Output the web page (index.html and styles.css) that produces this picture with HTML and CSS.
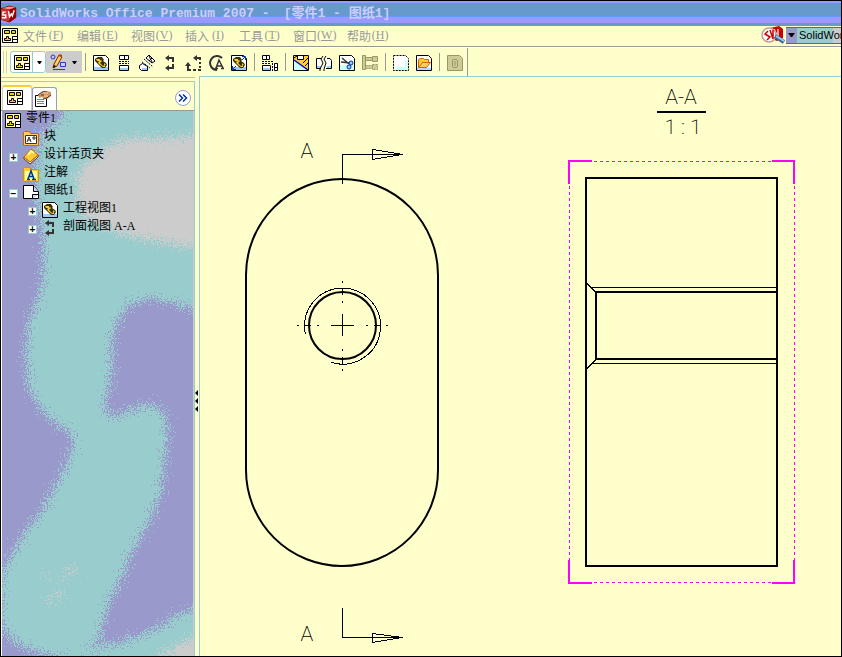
FILE: index.html
```html
<!DOCTYPE html>
<html lang="zh-CN">
<head>
  <meta charset="utf-8">
  <title>SolidWorks Office Premium 2007</title>
  <meta name="viewport" content="width=device-width, initial-scale=1.0">
  <link rel="stylesheet" href="styles.css">
</head>
<body>
  <!-- Shared icons -->
  <svg class="sprite" aria-hidden="true">
    <symbol id="i-sheet" viewBox="0 0 16 16">
      <path d="M.5 1.500h15v14H.500z" fill="#ffffcc" stroke="#000"/>
      <path d="M2.500 3.500h5v3h-5zM9.500 3.500h4v3h-4z" fill="#ffcc00" stroke="#000"/>
      <path d="M4.500 9.500h2v2h2v2h-6v-2h2z" fill="#ffcc00" stroke="#000"/>
      <path d="M10.500 9.500h5v6h-5zM10.500 12.500h5" fill="#fff" stroke="#000"/>
    </symbol>
    <symbol id="i-model" viewBox="0 0 16 16">
      <path d="M.5.500h12l3 3v12H.500z" fill="#fff" stroke="#000"/>
      <path d="M1 12h14v3H1z" fill="#99ccff"/>
      <path d="M2 4l3-2h4l2 3-1 1 3 2 1 2-2 3H9l-4-4-3-3z" fill="#333300"/>
      <path d="M3 4h4v2H4zM5 7l3-2 1 1-2 2 3 3 2-1v2h-2L6 9zM11 8l2 2h-2z" fill="#ffcc33"/>
    </symbol>
    <symbol id="i-section" viewBox="0 0 16 16">
      <path d="M7 3h4v4M11 9v4H7" fill="none" stroke="#333" stroke-width="2"/>
      <path d="M7 0v6L3 3zM7 10v6l-4-3z" fill="#333"/>
    </symbol>
    <symbol id="i-caret" viewBox="0 0 5 3">
      <path d="M0 0h5L3 3H2z" fill="#000"/>
    </symbol>
  </svg>

  <!-- Title -->
  <header class="titlebar">
    <svg class="app-logo" viewBox="0 0 18 18" aria-hidden="true">
      <path d="M0 3l9-3 7 2v11l-7 5-9-3z" fill="#990000"/>
      <path d="M0 4h9v13l-9-2z" fill="#cc3333"/>
      <path d="M9 4l7-2v11l-7 4z" fill="#990000"/>
      <path d="M1 3l8-2 6 1-6 2z" fill="#ff9999"/>
      <path d="M5 7H2v3h3v3H1M8 6l1 6 2-3 1 2 2-6" fill="none" stroke="#fff" stroke-width="1.500"/>
    </svg>
    <h1 class="title"><span>SolidWorks Office Premium 2007 -</span> <span>[零件1 - 图纸1]</span></h1>
  </header>

  <!-- Menu -->
  <div class="menubar">
    <svg class="icon"><use href="#i-sheet"/></svg>
    <nav class="menus">
      <button class="menu">文件<span>(<u>F</u>)</span></button>
      <button class="menu">编辑<span>(<u>E</u>)</span></button>
      <button class="menu">视图<span>(<u>V</u>)</span></button>
      <button class="menu">插入<span>(<u>I</u>)</span></button>
      <button class="menu">工具<span>(<u>T</u>)</span></button>
      <button class="menu">窗口<span>(<u>W</u>)</span></button>
      <button class="menu">帮助<span>(<u>H</u>)</span></button>
    </nav>
    <div class="search">
      <svg class="search-logo" viewBox="0 0 25 18" aria-hidden="true">
        <path d="M9 2l9-2 4 3v9l-6 3-7-3z" fill="#cc0000"/>
        <path d="M13 3v8M13 3l4 8V3" fill="none" stroke="#ffcccc" stroke-width="1.500"/>
        <circle cx="8" cy="9" r="7" fill="#fff" stroke="#cc9999" stroke-width="1.500"/>
        <path d="M7 5L4 8l5 3-3 3M9 4l3 9M12 4v9" fill="none" stroke="#cc0000" stroke-width="1.500"/>
        <path d="M14 10l9 6" stroke="#336699" stroke-width="4"/>
        <path d="M15 10l8 5" stroke="#99ccff" stroke-width="2"/>
      </svg>
      <button class="search-drop" aria-label="搜索范围"><svg class="search-caret"><use href="#i-caret"/></svg></button>
      <input class="search-box" type="text" value="SolidWorks" aria-label="搜索">
    </div>
  </div>

  <!-- Toolbar -->
  <div class="toolbar">
    <div class="grip"></div>
    <button class="drop-tool active" aria-label="工程图">
      <svg class="icon"><use href="#i-sheet"/></svg>
      <span class="drop-arrow"><svg class="caret"><use href="#i-caret"/></svg></span>
    </button>
    <button class="drop-tool sketch" aria-label="草图">
      <svg class="icon" viewBox="0 0 16 16">
        <circle cx="3" cy="3" r="2" fill="none" stroke="#3333cc"/>
        <path d="M10.500 8.500h5v4h-5z" fill="#ccccff" stroke="#3333cc"/>
        <path d="M3 15.500h12" stroke="#3333cc"/>
        <path d="M3 14l1-4 5-9 3 2-5 9z" fill="#ffcc66" stroke="#663300"/>
        <path d="M8 2l2-2 2 1v2z" fill="#cc3333"/>
        <path d="M3 14l1-3 2 1z" fill="#000"/>
      </svg>
      <span class="drop-arrow"><svg class="caret"><use href="#i-caret"/></svg></span>
    </button>
    <div class="sep"></div>
    <button class="tool" aria-label="模型视图"><svg class="icon"><use href="#i-model"/></svg></button>
    <button class="tool" aria-label="投影视图">
      <svg class="icon" viewBox="0 0 16 16">
        <path d="M3.500.500h9v4h-9zM8.500.500v4M3.500 10.500h9v5h-9z" fill="#fff" stroke="#000"/>
        <path d="M4 13h8v2H4z" fill="#99ccff"/>
        <path d="M3 6.500h10M3 8.500h10" stroke="#000066" stroke-dasharray="2 1"/>
      </svg>
    </button>
    <button class="tool" aria-label="辅助视图">
      <svg class="icon" viewBox="0 0 16 16">
        <path d="M7 3l3-3 6 6-3 2z" fill="#fff" stroke="#000"/>
        <path d="M10 1l3 6M13 3l-3 3" stroke="#000"/>
        <path d="M5 4l9 8M3 7l8 6" stroke="#000066" stroke-dasharray="2 1"/>
        <path d="M.5 10.500l3-2 5 3v4h-6l-2-2z" fill="#fff" stroke="#000"/>
        <path d="M3 13h5v2H3z" fill="#99ccff"/>
      </svg>
    </button>
    <button class="tool" aria-label="剖面视图"><svg class="icon"><use href="#i-section"/></svg></button>
    <button class="tool" aria-label="旋转剖视图">
      <svg class="icon" viewBox="0 0 16 16">
        <path d="M3 9v6h3" fill="none" stroke="#333" stroke-width="2"/>
        <path d="M0 11l3-4 3 4z" fill="#333"/>
        <path d="M8 15h3M13 15h3M15 11v2M15 7v2M15 5V3h-4" fill="none" stroke="#333" stroke-width="2"/>
        <path d="M12 0v6L8 3z" fill="#333"/>
      </svg>
    </button>
    <button class="tool" aria-label="局部视图">
      <svg class="icon" viewBox="0 0 16 16">
        <path d="M14 3A7 7 0 1 0 9 15" fill="none" stroke="#333" stroke-width="2"/>
        <path d="M8 13l3-8 4 8M9 11h5M7 13.500h3M13 13.500h3" fill="none" stroke="#333" stroke-width="1.500"/>
      </svg>
    </button>
    <button class="tool" aria-label="相对视图">
      <svg class="icon" viewBox="0 0 16 16">
        <use href="#i-model"/>
        <path d="M11 5l3-3M11 1.500h3.500V5M5 11l-3 3M1.500 11v3.500H5" fill="none" stroke="#0033cc"/>
      </svg>
    </button>
    <div class="sep"></div>
    <button class="tool" aria-label="标准三视图">
      <svg class="icon" viewBox="0 0 16 16">
        <path d="M.5.500h7v4h-7zM4.500.500v4M.500 10.500h8v5h-8zM12.500 8.500h3v7h-3zM12.500 12.500h3" fill="#fff" stroke="#000"/>
        <path d="M1 13h7v2H1z" fill="#99ccff"/>
        <path d="M0 6.500h12M0 8.500h9M10.500 8v8" stroke="#000066" stroke-dasharray="2 1"/>
      </svg>
    </button>
    <div class="sep"></div>
    <button class="tool" aria-label="断开的剖视图">
      <svg class="icon" viewBox="0 0 16 16">
        <path d="M0 0h16v16H0z" fill="#fff"/>
        <path d="M1 4h14v11z" fill="#ffcc33"/>
        <path d="M11 1h4v4h-4zM1 1h3v3H1z" fill="#ffcc33"/>
        <path d="M4.500 1v3.500h6V1M10 8l5-5M12 11l3-3M1 3l3-2" fill="none" stroke="#000"/>
        <path d="M1 5l14 10H1z" fill="#ccffff"/>
        <path d="M1 5l14 10" stroke="#0000cc" stroke-width="1.500"/>
        <path d="M.5.500h15v15H.500z" fill="none" stroke="#000"/>
      </svg>
    </button>
    <button class="tool" aria-label="断裂视图">
      <svg class="icon" viewBox="0 0 16 16">
        <path d="M7 1L5 4H.500v10H5l2-3-2-4zM11 1L8 5l2 4-2 4v2l3-1h4.500V4H12z" fill="#fff"/>
        <path d="M1 11h4v3H1zM11 11h4v3h-4z" fill="#99ccff"/>
        <path d="M5 3.500H.500v10H5M7 1L5 4l2 4-3 6v2M10 1L8 4l2 4-2 6v2M11 3.500h3l1.500 2v8H10" fill="none" stroke="#000"/>
      </svg>
    </button>
    <button class="tool" aria-label="剪裁视图">
      <svg class="icon" viewBox="0 0 16 16">
        <path d="M.5.500h12l3 3v12H.500z" fill="#fff" stroke="#000"/>
        <path d="M1 10h14v5H1z" fill="#ccffff"/>
        <path d="M3 3l7 6M2 7l9 1" stroke="#333" stroke-width="1.500"/>
        <circle cx="12" cy="8" r="2" fill="#99ccff" stroke="#003399"/>
        <circle cx="10" cy="12" r="2" fill="#99ccff" stroke="#003399"/>
      </svg>
    </button>
    <button class="tool" disabled aria-label="交替位置视图">
      <svg class="icon" viewBox="0 0 16 16">
        <path d="M.5.500h3v14h-3zM3.500 2.500h7v3h-7zM10.500 1.500h5v5h-5z" fill="#cccc99" stroke="#999966"/>
        <path d="M3.500 10.500h7v3h-7zM10.500 9.500h5v5h-5z" fill="#cccc99" stroke="#999966" stroke-dasharray="2 1"/>
      </svg>
    </button>
    <div class="sep"></div>
    <button class="tool" aria-label="空白视图">
      <svg class="icon" viewBox="0 0 16 16">
        <path d="M.5.500h12l3 3v12H.500z" fill="#fff" stroke="#000" stroke-dasharray="2 1"/>
        <path d="M3 12h12v3H3zM12 6h3v7h-3z" fill="#ccffff"/>
      </svg>
    </button>
    <button class="tool" aria-label="预定义的视图">
      <svg class="icon" viewBox="0 0 16 16">
        <path d="M.5.500h12l3 3v12H.500z" fill="#fff" stroke="#000"/>
        <path d="M1 13h14v2H1z" fill="#ccccff"/>
        <path d="M2.500 12.500v-8l2-1h3l1 1h4v3" fill="#ffcc33" stroke="#cc6600"/>
        <path d="M2.500 12.500l4-5h8l-4 5z" fill="#ffcc66" stroke="#cc6600"/>
      </svg>
    </button>
    <div class="sep"></div>
    <button class="tool" disabled aria-label="更新视图">
      <svg class="icon" viewBox="0 0 16 16">
        <path d="M.5.500h12l3 3v12H.500z" fill="#cccc99" stroke="#999966"/>
        <path d="M6 4.500h4M6 12.500h4M5.500 5v7M10.500 5v7M8 6v5" fill="none" stroke="#999966"/>
      </svg>
    </button>
    <div class="toolbar-end"></div>
  </div>

  <!-- Workspace -->
  <div class="workspace">
    <aside class="sidebar">
      <div class="panel">
        <div class="tabs">
          <button class="tab active" aria-label="特征管理器"><svg class="icon"><use href="#i-sheet"/></svg></button>
          <button class="tab" aria-label="属性管理器">
            <svg class="icon" viewBox="0 0 16 16">
              <path d="M.5 4.500h11v11H.500z" fill="#fff" stroke="#000"/>
              <path d="M2 8.500h7M2 10.500h7M2 12.500h7" stroke="#3399cc"/>
              <path d="M3 4l4-3 5-1 4 1v4l-4 3H9L7 6 4 7z" fill="#cc9966"/>
              <path d="M3 4l4-3 5-1M6 4h3M8 8l4-1 4-3" fill="none" stroke="#663333"/>
              <path d="M8 2h5M9 5h4" stroke="#ffcc99"/>
            </svg>
          </button>
          <button class="expand" aria-label="展开">
            <svg viewBox="0 0 16 16"><circle cx="8" cy="8" r="7.500" fill="#fff" stroke="#9999cc"/><path d="M4 4.500L7.500 8 4 11.500M8 4.500L11.500 8 8 11.500" fill="none" stroke="#003399" stroke-width="1.500"/></svg>
          </button>
        </div>

        <div class="tree">
          <svg class="tree-bg" viewBox="2 111 191 545" preserveAspectRatio="none" aria-hidden="true">
            <filter id="grain" x="-10%" y="-10%" width="120%" height="120%" color-interpolation-filters="sRGB">
              <feTurbulence type="fractalNoise" baseFrequency="0.7" numOctaves="3" seed="4" result="n"/>
              <feDisplacementMap in="SourceGraphic" in2="n" scale="36" xChannelSelector="R" yChannelSelector="G"/>
            </filter>
            <g filter="url(#grain)">
              <path fill="#99cccc" d="M66 90L64 116 52 126 40 134 39 150 36 165 35 185 39 213 43 235 43 280 36 305 28 325 26 350 28 385 38 405 52 420 68 430 73 440 70 455 62 475 50 495 40 515 25 530 10 560 1 575 1 625 15 642 30 650 60 658 80 653 98 642 103 620 110 600 125 570 130 555 145 530 155 510 162 485 165 455 168 430 164 412 150 404 130 410 112 418 104 408 108 390 112 370 112 340 118 320 130 304 150 298 175 304 215 314 215 90z"/>
              <path fill="#99cccc" d="M215 602L193 610 175 617 160 627 140 635 120 643 105 645 80 652 40 670 215 670z"/>
              <path fill="#cccccc" d="M215 134L165 138 130 138 110 144 95 156 82 167 76 182 76 200 82 214 95 225 120 234 150 240 215 252z"/>
              <path fill="#cccccc" d="M215 628L193 638 178 645 158 656 150 670 215 670z"/>
              <path fill="#cccccc" d="M60 588L50 598 47 601 58 600z"/>
              <path fill="#cccccc" d="M74 562L66 574 64 580 72 574zM44 572l4 6 2-3z"/>
            </g>
          </svg>
          <ul class="nodes">
            <li class="node root"><svg class="icon"><use href="#i-sheet"/></svg><span>零件<b>1</b></span></li>
            <li class="node">
              <span class="toggle-space"></span>
              <svg class="icon" viewBox="0 0 16 16">
                <path d="M.5 2.500l1-1h5l1 2h8v12H.500z" fill="#ffcc66" stroke="#cc6600"/>
                <path d="M2.500 5.500h11v8h-11z" fill="#fff" stroke="#333"/>
                <path d="M4 12l2-5 2 5M5 10h3M10 7h2v2h-2z" fill="none" stroke="#333"/>
              </svg>
              <span>块</span>
            </li>
            <li class="node">
              <button class="toggle" aria-label="展开">+</button>
              <svg class="icon" viewBox="0 0 16 16">
                <path d="M1 9l6 5 8-7v2l-8 7-6-5z" fill="#fff" stroke="#663300"/>
                <path d="M1 9l7-8 7 6-8 7z" fill="#ffcc33" stroke="#cc6600"/>
                <path d="M5 7l3-4 3 2" fill="none" stroke="#ffff99" stroke-width="2"/>
              </svg>
              <span>设计活页夹</span>
            </li>
            <li class="node">
              <span class="toggle-space"></span>
              <svg class="icon" viewBox="0 0 16 16">
                <path d="M.5 2.500l1-1h5l1 2h8v12H.500z" fill="#ffcc33" stroke="#cc9900"/>
                <path d="M2 5h12v9H2z" fill="#ffff99"/>
                <path d="M5 13l3-8 3 8M6 10.500h4M4 13.500h3M9 13.500h4" fill="none" stroke="#003399" stroke-width="1.500"/>
              </svg>
              <span>注解</span>
            </li>
            <li class="node">
              <button class="toggle" aria-label="折叠">−</button>
              <svg class="icon" viewBox="0 0 16 16">
                <path d="M.5 1.500h10l5 6v7H.500z" fill="#fff" stroke="#000"/>
                <path d="M10.500 1.500v6h5M9.500 14.500v-4h6" fill="#ccccff" stroke="#000"/>
              </svg>
              <span>图纸<b>1</b></span>
            </li>
            <li class="node child"><button class="toggle" aria-label="展开">+</button><svg class="icon"><use href="#i-model"/></svg><span>工程视图<b>1</b></span></li>
            <li class="node child"><button class="toggle" aria-label="展开">+</button><svg class="icon"><use href="#i-section"/></svg><span>剖面视图<b> A-A</b></span></li>
          </ul>
        </div>
      </div>
    </aside>

    <div class="splitter"><i></i><i></i><i></i></div>

    <!-- Drawing sheet -->
    <main class="sheet">
      <svg class="drawing" viewBox="200 77 641 579" preserveAspectRatio="xMinYMin meet">
        <!-- front view -->
        <g class="thick">
          <rect x="246" y="179" width="192" height="387" rx="96"/>
          <circle cx="342.500" cy="325.500" r="33.500"/>
        </g>
        <g class="thin">
          <path d="M305.500 334.500A38 38 0 1 1 331.500 362.500"/>
          <path d="M331 325.500h23M342.500 314v22M304 325.500h7M374 325.500h7M342.500 288v7M342.500 357v7"/>
          <path d="M297 325.500h2M317 325.500h2M366 325.500h2M386 325.500h2M342.500 281v2M342.500 301v2M342.500 349v2M342.500 369v2"/>
          <!-- section arrows -->
          <path d="M342.500 184v-29.500h60M372.500 149.500l30 5-30 5z"/>
          <path d="M342.500 608v29.500h60M372.500 633.500l30 4-30 5z"/>
        </g>
        <text class="label" x="307" y="158">A</text>
        <text class="label" x="307" y="641">A</text>

        <!-- section view -->
        <g class="thick">
          <rect x="586" y="178" width="191" height="388"/>
          <path d="M777 292H596V359H777"/>
        </g>
        <path class="thin" d="M777 287.500H591M777 363.500H591M587 283.500l9 9M587 368.500l9-9"/>
        <path class="select-edge" d="M569.500 162v420M794.500 162v420M570 161.500h225M570 582.500h225"/>
        <path class="select-corner" d="M569 184v-23h23M772 161h22v23M569 560v23h23M772 583h22v-23"/>
        <text class="label" x="681" y="104">A-A</text>
        <path class="thick" d="M657 112h49"/>
        <text class="label" x="683" y="134">1 : 1</text>
      </svg>
    </main>
  </div>
</body>
</html>
```
FILE: styles.css
```css
/* Base Styles */
:root {
  --paper: #ffffcc;
  --teal: #99cccc;
  --violet: #9999cc;
  --gray: #999999;
  --silver: #cccccc;
}

* {
  box-sizing: border-box;
}

body {
  margin: 0;
  height: 100vh;
  display: flex;
  flex-direction: column;
  overflow: hidden;
  border: 1px solid #000;
  background: var(--paper);
  font-family: "Liberation Sans", "Noto Sans CJK SC", sans-serif;
  font-size: 12px;
}

button {
  margin: 0;
  padding: 0;
  border: none;
  background: none;
  font: inherit;
  color: inherit;
}

svg {
  display: block;
  flex: none;
}

.sprite {
  position: absolute;
  width: 0;
  height: 0;
}

.icon {
  width: 16px;
  height: 16px;
}

.caret {
  width: 5px;
  height: 3px;
}

/* Title */
.titlebar {
  flex: none;
  height: 25px;
  display: flex;
  align-items: center;
  gap: 2px;
  background: linear-gradient(#9999ff 2px, #6699cc 2px, #6699cc 15px, #6699ff 15px, #6699ff 16px, #9999ff 16px, #9999ff 22px, #6699cc 22px);
}

.app-logo {
  width: 17px;
  height: 18px;
}

.title {
  margin: 0;
  display: flex;
  gap: 14px;
  font: bold 13px/16px "Liberation Mono", "Noto Sans CJK SC", monospace;
  color: #ccccff;
  white-space: nowrap;
}

/* Menu */
.menubar {
  flex: none;
  height: 22px;
  padding-left: 1px;
  display: flex;
  align-items: flex-start;
  border-bottom: 1px solid #fff;
  box-shadow: inset 0 -1px var(--gray);
}

.menubar > .icon {
  margin-top: 1px;
}

.menus {
  display: flex;
  gap: 12px;
  margin-left: 5px;
}

.menu {
  display: flex;
  align-items: center;
  height: 19px;
  color: var(--gray);
}

.menu span {
  width: 18px;
  font: 12px "Liberation Serif", serif;
  text-align: center;
  white-space: nowrap;
}

.search {
  margin-left: auto;
  display: flex;
  align-items: center;
}

.search-logo {
  width: 25px;
  height: 18px;
}

.search-drop {
  width: 11px;
  height: 17px;
  display: flex;
  align-items: center;
  justify-content: center;
  background: var(--violet);
  border: solid #666;
  border-width: 1px 0;
}

.search-caret {
  width: 7px;
  height: 4px;
}

.search-box {
  width: 44px;
  height: 17px;
  padding: 0 0 0 2px;
  border: solid #666;
  border-width: 1px 0;
  border-radius: 0;
  background: linear-gradient(to right, var(--teal) 36px, var(--silver) 36px);
  font: 11px "Liberation Sans", sans-serif;
  color: #000;
}

/* Toolbar */
.toolbar {
  flex: none;
  height: 28px;
  padding-left: 2px;
  display: flex;
  align-items: center;
}

.grip {
  width: 4px;
  height: 22px;
  margin-right: 3px;
  border: solid var(--silver);
  border-width: 0 1px;
}

.drop-tool {
  width: 36px;
  height: 22px;
  display: flex;
  align-items: center;
  justify-content: space-between;
  padding-left: 3px;
  border: 1px solid transparent;
}

.drop-tool.active {
  background: #fff;
  border-color: var(--teal);
  border-radius: 3px;
}

.drop-tool.sketch {
  background: var(--silver);
}

.drop-arrow {
  width: 13px;
  height: 20px;
  display: flex;
  align-items: center;
  justify-content: center;
}

.active .drop-arrow {
  border-left: 1px solid var(--teal);
}

.sep {
  width: 8px;
  height: 18px;
  background: linear-gradient(var(--gray), var(--gray)) 3px 0 / 1px 100% no-repeat;
}

.tool {
  width: 23px;
  height: 22px;
  padding: 1px 4px 0 3px;
  display: flex;
  align-items: center;
}

.toolbar-end {
  width: 1px;
  height: 100%;
  background: var(--gray);
}

/* Workspace */
.workspace {
  flex: 1;
  min-height: 0;
  display: flex;
}

.sidebar {
  flex: none;
  width: 194px;
  display: flex;
  margin-top: 1px;
  padding-top: 3px;
  border-top: 1px solid var(--teal);
}

.panel {
  flex: 1;
  min-width: 0;
  display: flex;
  flex-direction: column;
  border: solid var(--teal);
  border-width: 1px 1px 0 0;
}

.tabs {
  flex: none;
  height: 29px;
  padding: 3px 3px 0 1px;
  display: flex;
  align-items: flex-end;
  border-bottom: 1px solid var(--gray);
}

.tab {
  width: 25px;
  height: 23px;
  display: flex;
  align-items: center;
  padding-left: 2px;
  background: #fff;
  border: 1px solid var(--violet);
  border-bottom: none;
  border-radius: 3px 3px 0 0;
}

.tab.active {
  width: 30px;
  height: 25px;
  padding: 0 0 4px 4px;
  border-color: var(--silver);
  border-top: 2px solid #ffcc33;
}

.expand {
  width: 16px;
  height: 16px;
  margin: 0 0 4px auto;
}

/* Feature tree */
.tree {
  position: relative;
  flex: 1;
  min-height: 0;
  overflow: hidden;
  margin-left: 1px;
  background: var(--violet);
  border-right: 1px solid var(--silver);
}

.tree-bg {
  position: absolute;
  top: 0;
  left: 0;
  width: 100%;
  height: 100%;
  shape-rendering: crispEdges;
}

.nodes {
  position: relative;
  margin: 0;
  padding: 0;
  list-style: none;
}

.node {
  height: 18px;
  padding-left: 7px;
  display: flex;
  align-items: center;
  white-space: nowrap;
}

.node.root {
  padding-left: 3px;
}

.node.child {
  padding-left: 26px;
}

.node .icon {
  margin-right: 5px;
}

.node > span {
  line-height: 14px;
  padding-bottom: 4px;
}

.node b {
  font: 12px "Liberation Serif", serif;
  white-space: pre;
}

.toggle,
.node > .toggle-space {
  flex: none;
  width: 9px;
  height: 9px;
  margin: 2px 5px 0 0;
  padding: 0;
}

.toggle {
  background: #fff;
  border: 1px solid #99cccc;
  font: bold 10px/7px "Liberation Sans", sans-serif;
  color: #000;
}

/* Splitter */
.splitter {
  flex: none;
  width: 4px;
  padding-top: 70px;
  display: flex;
  flex-direction: column;
  justify-content: center;
  gap: 2px;
}

.splitter i {
  border: solid transparent;
  border-width: 3px 3px 3px 0;
  border-right-color: #000;
  width: 3px;
}

/* Drawing sheet */
.sheet {
  flex: 1;
  min-width: 0;
  border: solid var(--teal);
  border-width: 1px 0 0 1px;
}

.drawing {
  width: 100%;
  height: 100%;
  fill: none;
}

.thick {
  stroke: #000;
  stroke-width: 2;
}

.thin {
  stroke: #000;
  stroke-width: 1;
  shape-rendering: crispEdges;
}

.select-edge {
  stroke: #ff00ff;
  stroke-dasharray: 3 3;
  shape-rendering: crispEdges;
}

.select-corner {
  stroke: #ff00ff;
  stroke-width: 2;
}

.label {
  font: 200 21px Roboto, "Liberation Sans", sans-serif;
  text-anchor: middle;
  fill: #000;
}
```
